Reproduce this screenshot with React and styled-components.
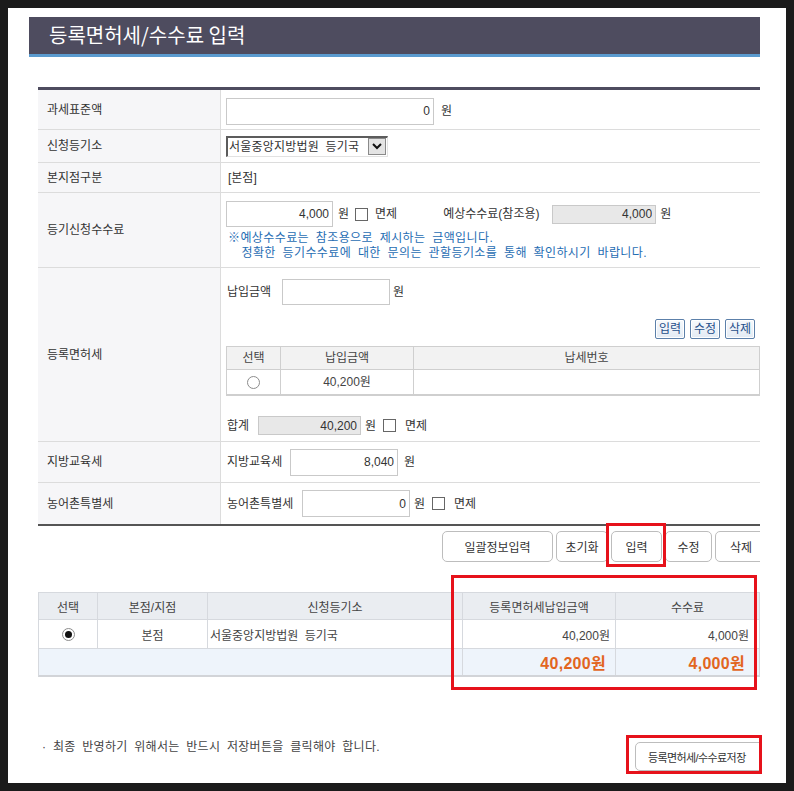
import React from "react";
import styled, { createGlobalStyle } from "styled-components";

const GlobalStyle = createGlobalStyle`
  html, body { margin: 0; padding: 0; background: #1b1b1b; }
  body {
    font-family: "Liberation Sans", "Noto Sans CJK KR", sans-serif;
    font-size: 12px;
    color: #333;
    word-spacing: 3px;
  }
  * { box-sizing: border-box; }
`;

const Screen = styled.div`
  position: relative;
  width: 794px;
  height: 791px;
  background: #1b1b1b;
  padding: 8px;
`;

const Sheet = styled.div`
  width: 778px;
  height: 775px;
  background: #fff;
  padding: 9px 0 0 21px;
`;

const Viewport = styled.div`
  width: 731px;
  overflow: hidden;
`;

const TitleBar = styled.h1`
  margin: 0;
  height: 40px;
  background: #4e4c5f;
  border-bottom: 3px solid #5b9bcf;
  color: #fff;
  font-family: "Noto Sans CJK KR", sans-serif;
  font-size: 20px;
  font-weight: normal;
  line-height: 35px;
  padding-left: 20px;
  word-spacing: 0;
`;

const Content = styled.div`
  margin-left: 9px;
  width: 722px;
`;

/* ---------- input form ---------- */
const FormGrid = styled.div`
  margin-top: 30px;
  border-top: 3px solid #4e4c5f;
  border-bottom: 2px solid #555;
`;

const FormRow = styled.div`
  display: grid;
  grid-template-columns: 183px 1fr;
  height: ${(p) => p.$h}px;
  border-bottom: 1px solid #dcdcdc;
  &:last-child { border-bottom: none; }
`;

const LabelCell = styled.div`
  background: #f6f6f8;
  border-right: 1px solid #dcdcdc;
  padding-left: 9px;
  display: flex;
  align-items: center;
  line-height: 16px;
`;

const ValueCell = styled.div`
  padding: ${(p) => p.$pt || 0}px 0 0 5px;
  display: flex;
  flex-direction: ${(p) => (p.$col ? "column" : "row")};
  align-items: ${(p) => (p.$col ? "stretch" : "center")};
  line-height: 16px;
`;

const Line = styled.div`
  display: flex;
  align-items: center;
  margin-top: ${(p) => p.$mt || 0}px;
`;

const Field = styled.input`
  width: ${(p) => p.$w}px;
  height: ${(p) => p.$h || 27}px;
  margin: 0;
  border: 1px solid #c9c9c9;
  background: ${(p) => (p.$muted ? "#e8e8e8" : "#fff")};
  font: inherit;
  font-size: 12px;
  color: #333;
  text-align: right;
  padding: 0 3px 0 0;
  outline: none;
`;

const Unit = styled.span`
  margin-left: ${(p) => p.$ml ?? 5}px;
`;

const InlineLabel = styled.span`
  display: inline-block;
  width: ${(p) => p.$w}px;
  margin-left: ${(p) => p.$ml || 0}px;
  padding-left: 1px;
  white-space: nowrap;
`;

const Check = styled.span`
  display: inline-block;
  width: 13px;
  height: 13px;
  border: 1px solid #666;
  background: #fff;
  margin-left: ${(p) => p.$ml ?? 6}px;
  margin-right: ${(p) => p.$mr ?? 7}px;
`;

const PlainText = styled.span`
  padding-left: 2px;
`;

const Note = styled.div`
  margin-top: 4px;
  color: #1f6db3;
  line-height: 15px;
  padding-left: 2px;
  white-space: pre;
  letter-spacing: 0.4px;
`;

const SelectBox = styled.div`
  width: 162px;
  height: 21px;
  display: flex;
  align-items: center;
  border-top: 2px solid #5c5c5c;
  border-left: 2px solid #5c5c5c;
  border-right: 1px solid #e2e2e2;
  border-bottom: 1px solid #e2e2e2;
  background: #fff;
  padding-left: 1px;
`;

const SelectText = styled.span`
  flex: 1;
  white-space: nowrap;
  overflow: hidden;
  letter-spacing: 0.2px;
`;

const DropButton = styled.span`
  width: 18px;
  height: 17px;
  margin-right: 1px;
  border: 1px solid #8a8a8a;
  background: #e4e4e4;
  display: flex;
  align-items: center;
  justify-content: center;
`;

const MiniButtons = styled.div`
  display: flex;
  justify-content: flex-end;
  gap: 5px;
  padding-right: 5px;
  margin-top: 14px;
`;

const MiniButton = styled.span`
  width: 30px;
  height: 20px;
  border: 1px solid #5c80aa;
  border-radius: 2px;
  background: linear-gradient(#f7f9fc, #e3ebf4);
  box-shadow: inset 0 0 0 1px #fff;
  color: #1f4f8a;
  display: flex;
  align-items: center;
  justify-content: center;
  font-size: 12px;
`;

/* ---------- payment list inside the form ---------- */
const PayTable = styled.div`
  margin-top: 7px;
  display: grid;
  grid-template-columns: 54px 133px 1fr;
  border: 1px solid #cfcfcf;
  border-bottom: 2px solid #cfcfcf;
`;

const PayCell = styled.div`
  height: ${(p) => (p.$head ? 23 : 24)}px;
  background: ${(p) => (p.$head ? "#f2f2f2" : "#fff")};
  border-right: ${(p) => (p.$last ? "none" : "1px solid #cfcfcf")};
  border-bottom: ${(p) => (p.$head ? "1px solid #cfcfcf" : "none")};
  display: flex;
  align-items: center;
  justify-content: center;
  color: #444;
`;

const Radio = styled.span`
  width: 13px;
  height: 13px;
  border-radius: 50%;
  border: 1px solid #8c8c8c;
  background: #fff;
  display: inline-flex;
  align-items: center;
  justify-content: center;
  &::after {
    content: "";
    width: 7px;
    height: 7px;
    border-radius: 50%;
    background: ${(p) => (p.$on ? "#111" : "transparent")};
  }
`;

/* ---------- action buttons ---------- */
const ActionRow = styled.div`
  display: flex;
  gap: 3px;
  margin-top: 5px;
  padding-left: 404px;
  white-space: nowrap;
`;

const ActionButton = styled.span`
  flex: none;
  width: ${(p) => p.$w}px;
  height: 31px;
  border: 1px solid #bdbdbd;
  border-radius: 5px;
  background: #fff;
  display: flex;
  align-items: center;
  justify-content: center;
  color: #333;
`;

/* ---------- summary table ---------- */
const SummaryTable = styled.div`
  margin-top: 30px;
  display: grid;
  grid-template-columns: 59px 110px 255px 153px 1fr;
  border: 1px solid #d6d9de;
  border-bottom: 2px solid #d2d4d8;
`;

const SumCell = styled.div`
  height: ${(p) => p.$h}px;
  grid-column: ${(p) => (p.$span ? `span ${p.$span}` : "auto")};
  background: ${(p) => p.$bg || "#fff"};
  border-right: ${(p) => (p.$last ? "none" : "1px solid #d6d9de")};
  border-bottom: ${(p) => (p.$nb ? "none" : "1px solid #d6d9de")};
  display: flex;
  align-items: center;
  justify-content: ${(p) => p.$align || "center"};
  padding: 0 ${(p) => p.$pr || 0}px 0 ${(p) => p.$pl || 0}px;
  color: #444;
  white-space: nowrap;
`;

const Total = styled.span`
  color: #e2661f;
  font-weight: bold;
  font-size: 16px;
  letter-spacing: 0.3px;
`;

/* ---------- footer ---------- */
const Footer = styled.div`
  margin-top: 62px;
  margin-left: 4px;
  display: flex;
  justify-content: space-between;
  align-items: flex-start;
`;

const FootNote = styled.p`
  margin: 0;
  line-height: 16px;
  color: #444;
  letter-spacing: 0.3px;
`;

const SaveButton = styled.span`
  margin-top: 3px;
  width: 125px;
  height: 29px;
  border: 1px solid #bdbdbd;
  border-radius: 5px 0 0 5px;
  background: #fff;
  display: flex;
  align-items: center;
  padding-left: 12px;
  color: #333;
  white-space: nowrap;
  font-size: 11px;
  letter-spacing: -0.6px;
  word-spacing: 0;
`;

/* red markers drawn over the page */
const Marker = styled.div`
  position: absolute;
  left: ${(p) => p.$x}px;
  top: ${(p) => p.$y}px;
  width: ${(p) => p.$w}px;
  height: ${(p) => p.$h}px;
  border: 3px solid #e6121b;
  pointer-events: none;
`;

const Chevron = () => (
  <svg width="10" height="7" viewBox="0 0 10 7">
    <polyline points="1,1 5,5 9,1" fill="none" stroke="#111" strokeWidth="2" />
  </svg>
);

export default function App() {
  return (
    <>
      <GlobalStyle />
      <Screen>
        <Sheet>
          <Viewport>
            <TitleBar>등록면허세/수수료 입력</TitleBar>
            <Content>
              <FormGrid>
                <FormRow $h={40}>
                  <LabelCell>과세표준액</LabelCell>
                  <ValueCell $pt={3}>
                    <Field $w={208} value="0" readOnly />
                    <Unit $ml={7}>원</Unit>
                  </ValueCell>
                </FormRow>
                <FormRow $h={33}>
                  <LabelCell>신청등기소</LabelCell>
                  <ValueCell>
                    <SelectBox>
                      <SelectText>서울중앙지방법원 등기국</SelectText>
                      <DropButton>
                        <Chevron />
                      </DropButton>
                    </SelectBox>
                  </ValueCell>
                </FormRow>
                <FormRow $h={30}>
                  <LabelCell>본지점구분</LabelCell>
                  <ValueCell>
                    <PlainText>[본점]</PlainText>
                  </ValueCell>
                </FormRow>
                <FormRow $h={75}>
                  <LabelCell>등기신청수수료</LabelCell>
                  <ValueCell $col $pt={8}>
                    <Line>
                      <Field $w={107} $h={26} value="4,000" readOnly />
                      <Unit>원</Unit>
                      <Check />
                      <span>면제</span>
                      <InlineLabel $w={110} $ml={45}>
                        예상수수료(참조용)
                      </InlineLabel>
                      <Field $w={104} $h={19} $muted value="4,000" readOnly />
                      <Unit $ml={4}>원</Unit>
                    </Line>
                    <Note>
                      {"※예상수수료는 참조용으로 제시하는 금액입니다.\n  정확한 등기수수료에 대한 문의는 관할등기소를 통해 확인하시기 바랍니다."}
                    </Note>
                  </ValueCell>
                </FormRow>
                <FormRow $h={174}>
                  <LabelCell>등록면허세</LabelCell>
                  <ValueCell $col $pt={11}>
                    <Line>
                      <InlineLabel $w={56}>납입금액</InlineLabel>
                      <Field $w={108} $h={26} value="" readOnly />
                      <Unit $ml={3}>원</Unit>
                    </Line>
                    <MiniButtons>
                      <MiniButton>입력</MiniButton>
                      <MiniButton>수정</MiniButton>
                      <MiniButton>삭제</MiniButton>
                    </MiniButtons>
                    <PayTable>
                      <PayCell $head>선택</PayCell>
                      <PayCell $head>납입금액</PayCell>
                      <PayCell $head $last>납세번호</PayCell>
                      <PayCell>
                        <Radio />
                      </PayCell>
                      <PayCell>40,200원</PayCell>
                      <PayCell $last />
                    </PayTable>
                    <Line $mt={20}>
                      <InlineLabel $w={32}>합계</InlineLabel>
                      <Field $w={103} $h={19} $muted value="40,200" readOnly />
                      <Unit $ml={4}>원</Unit>
                      <Check $ml={7} $mr={9} />
                      <span>면제</span>
                    </Line>
                  </ValueCell>
                </FormRow>
                <FormRow $h={41}>
                  <LabelCell>지방교육세</LabelCell>
                  <ValueCell>
                    <InlineLabel $w={64}>지방교육세</InlineLabel>
                    <Field $w={108} $h={27} value="8,040" readOnly />
                    <Unit $ml={6}>원</Unit>
                  </ValueCell>
                </FormRow>
                <FormRow $h={41}>
                  <LabelCell>농어촌특별세</LabelCell>
                  <ValueCell>
                    <InlineLabel $w={76}>농어촌특별세</InlineLabel>
                    <Field $w={108} $h={27} value="0" readOnly />
                    <Unit $ml={4}>원</Unit>
                    <Check $ml={7} $mr={9} />
                    <span>면제</span>
                  </ValueCell>
                </FormRow>
              </FormGrid>

              <ActionRow>
                <ActionButton $w={111}>일괄정보입력</ActionButton>
                <ActionButton $w={52}>초기화</ActionButton>
                <ActionButton $w={51}>입력</ActionButton>
                <ActionButton $w={47}>수정</ActionButton>
                <ActionButton $w={52}>삭제</ActionButton>
              </ActionRow>

              <SummaryTable>
                <SumCell $h={27} $bg="#eaedf1">선택</SumCell>
                <SumCell $h={27} $bg="#eaedf1">본점/지점</SumCell>
                <SumCell $h={27} $bg="#eaedf1">신청등기소</SumCell>
                <SumCell $h={27} $bg="#eaedf1">등록면허세납입금액</SumCell>
                <SumCell $h={27} $bg="#eaedf1" $last>수수료</SumCell>

                <SumCell $h={29}>
                  <Radio $on />
                </SumCell>
                <SumCell $h={29}>본점</SumCell>
                <SumCell $h={29} $align="flex-start" $pl={2}>
                  서울중앙지방법원 등기국
                </SumCell>
                <SumCell $h={29} $align="flex-end" $pr={5}>
                  40,200원
                </SumCell>
                <SumCell $h={29} $align="flex-end" $pr={10} $last>
                  4,000원
                </SumCell>

                <SumCell $h={26} $span={3} $bg="#eef4fb" $nb />
                <SumCell $h={26} $bg="#eef4fb" $align="flex-end" $pr={9} $nb>
                  <Total>40,200원</Total>
                </SumCell>
                <SumCell $h={26} $bg="#eef4fb" $align="flex-end" $pr={14} $nb $last>
                  <Total>4,000원</Total>
                </SumCell>
              </SummaryTable>

              <Footer>
                <FootNote>· 최종 반영하기 위해서는 반드시 저장버튼을 클릭해야 합니다.</FootNote>
                <SaveButton>등록면허세/수수료저장</SaveButton>
              </Footer>
            </Content>
          </Viewport>
        </Sheet>

        <Marker $x={606} $y={523} $w={60} $h={44} />
        <Marker $x={451} $y={575} $w={306} $h={115} />
        <Marker $x={626} $y={735} $w={136} $h={39} />
      </Screen>
    </>
  );
}
